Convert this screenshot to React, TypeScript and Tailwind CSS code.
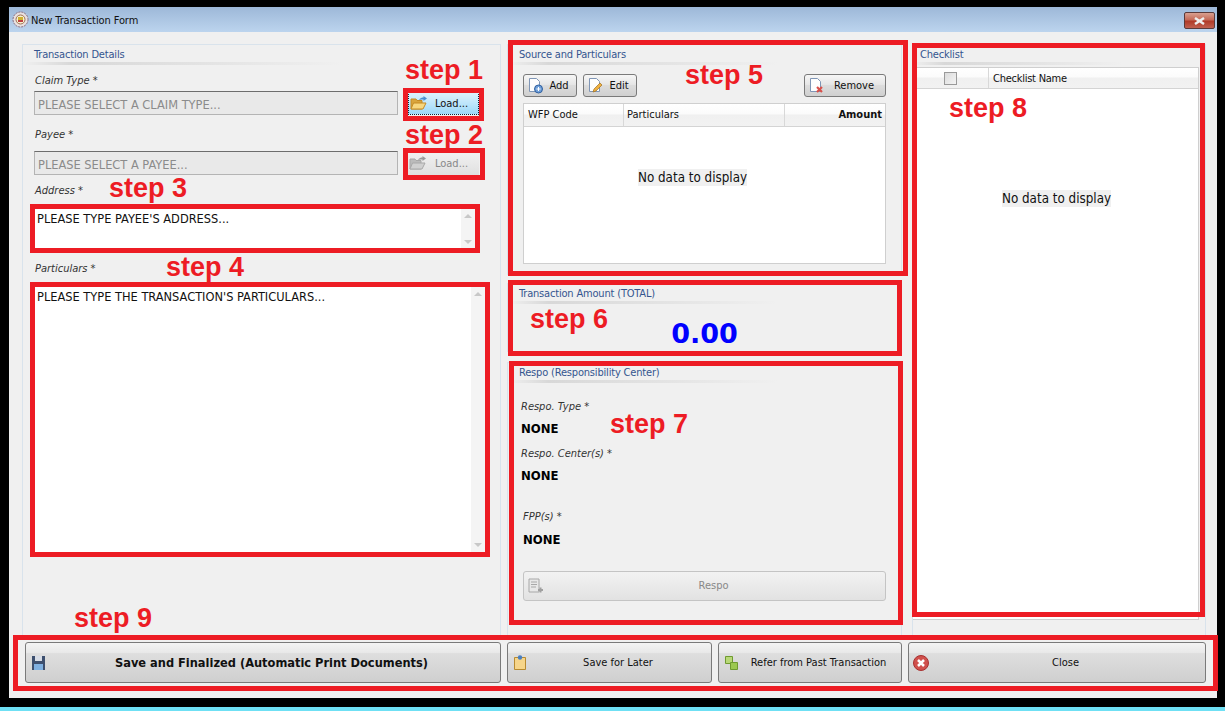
import React from "react";

const ui = "font-['DejaVu_Sans_Condensed','Noto_Sans',sans-serif]";
const btnBg = "bg-[linear-gradient(#f6f6f6,#e6e6e6_45%,#dcdcdc_50%,#d0d0d0)]";

function Folder({ gray = false }: { gray?: boolean }) {
  const a = gray ? "#d0d0d0" : "#f7d77e";
  const b = gray ? "#a8a8a8" : "#c58a22";
  const c = gray ? "#9a9a9a" : "#4a8fd0";
  return (
    <svg width="17" height="14" viewBox="0 0 17 14" className="shrink-0">
      <path d="M1 3h5l1 1.500h5V13H1z" fill={gray ? "#bbb" : "#d9a53c"} stroke={b} />
      <path d="M1 13l2.500-6H16l-3 6z" fill={a} stroke={b} />
      <path d="M9 4c1-2 3-2.500 4.500-2.500V0L17 2.500 13.500 5V3.500C12 3.500 10.500 3.500 9 4z" fill={c} />
    </svg>
  );
}

function Page({ children }: { children?: React.ReactNode }) {
  return (
    <svg width="16" height="17" viewBox="0 0 16 17" className="shrink-0">
      <path d="M1.500 1.500h7l3 3v10h-10z" fill="#fdfdfd" stroke="#7f95b5" />
      {children}
    </svg>
  );
}

function Group({ title, className, pad = "pl-[11px]", line = "w-[270px]", children }: { title: string; className: string; pad?: string; line?: string; children?: React.ReactNode }) {
  return (
    <section className={`border border-[#d9e3ec] bg-[#f0f0f0] ${className}`}>
      <h2 className={`${pad} h-[17px] text-[11px] leading-[19px] tracking-[-0.18px] font-normal text-[#34558f]`}>{title}</h2>
      <div className={`mb-[1px] h-[3px] bg-[linear-gradient(90deg,#f0f0f0,#d8d8d8_15%,#e4e4e4_60%,#f0f0f0)] ${line}`} />
      {children}
    </section>
  );
}

function Field({ text }: { text: string }) {
  return (
    <div className="h-[24px] w-[364px] border border-[#b4b4b4] border-t-[#6d6d6d] bg-[#e9e9e9] pl-[3px] text-[12.7px] leading-[25px] text-[#8b8b8b]">
      {text}
    </div>
  );
}

function Label({ children, className = "" }: { children: React.ReactNode; className?: string }) {
  return <div className={`text-[11px] italic leading-[14px] text-[#333] ${className}`}>{children}</div>;
}

function Scroll() {
  return (
    <div className="flex w-[14px] flex-col items-center justify-between bg-[#f4f4f4] py-[5px]">
      <div className="h-0 w-0 border-x-[4px] border-b-[4px] border-x-transparent border-b-[#c8c8c8]" />
      <div className="h-0 w-0 border-x-[4px] border-t-[4px] border-x-transparent border-t-[#c8c8c8]" />
    </div>
  );
}

function SmallBtn({ icon, label, className }: { icon: React.ReactNode; label: string; className: string }) {
  return (
    <button className={`flex h-[23px] items-center rounded-[3px] border border-[#7a7a7a] ${btnBg} pl-[4px] text-[11px] text-[#111] ${className}`}>
      {icon}
      <span className="flex-1 pr-[2px] pt-[1px] text-center">{label}</span>
    </button>
  );
}

function BigBtn({ icon, label, className, bold = false }: { icon: React.ReactNode; label: string; className: string; bold?: boolean }) {
  return (
    <button className={`flex h-[41px] items-center rounded-[3px] border border-[#7a7a7a] bg-[linear-gradient(#f4f4f4,#e8e8e8_26%,#dedede_27%,#cfcfcf)] pl-[4px] ${bold ? "text-[12.7px] font-bold" : "text-[11px]"} text-[#111] ${className}`}>
      <span className="flex h-[20px] w-[16px] shrink-0 items-center justify-center">{icon}</span>
      <span className="flex-1 whitespace-nowrap pr-[3px] pt-[1px] text-center">{label}</span>
    </button>
  );
}

function Grid({ className, children }: { className: string; children: React.ReactNode }) {
  return <div className={`flex flex-col border border-[#cfcfcf] bg-white ${className}`}>{children}</div>;
}

function Empty({ className }: { className: string }) {
  return (
    <div className={`flex flex-1 justify-center ${className}`}>
      <span className="h-[17px] bg-[#f0f0f0] text-[13.3px] leading-[17px] text-[#111]">No data to display</span>
    </div>
  );
}

const headBg = "bg-[linear-gradient(#ffffff,#fbfbfb_45%,#f0f0f0_50%,#f2f2f2)]";

const boxes = [
  "left-[403px] top-[88px] w-[81px] h-[33px]",
  "left-[403px] top-[148px] w-[82px] h-[32px]",
  "left-[30px] top-[204px] w-[450px] h-[49px]",
  "left-[30px] top-[282px] w-[460px] h-[275px]",
  "left-[508px] top-[40px] w-[400px] h-[236px]",
  "left-[508px] top-[280px] w-[394px] h-[76px]",
  "left-[509px] top-[361px] w-[394px] h-[264px]",
  "left-[912px] top-[43px] w-[293px] h-[574px]",
  "left-[13px] top-[635px] w-[1205px] h-[56px]",
];

const steps = [
  { t: "step 1", c: "left-[405px] top-[55px]" },
  { t: "step 2", c: "left-[405px] top-[120px]" },
  { t: "step 3", c: "left-[109px] top-[173px]" },
  { t: "step 4", c: "left-[166px] top-[252px]" },
  { t: "step 5", c: "left-[685px] top-[60px]" },
  { t: "step 6", c: "left-[530px] top-[304px]" },
  { t: "step 7", c: "left-[610px] top-[409px]" },
  { t: "step 8", c: "left-[949px] top-[93px]" },
  { t: "step 9", c: "left-[74px] top-[603px]" },
];

export default function App() {
  return (
    <div className={`relative flex h-[711px] w-[1225px] flex-col overflow-hidden bg-black ${ui}`}>
      <div className="mx-[9px] mt-[7px] flex h-[691px] w-[1208px] flex-col bg-[#f0f0f0]">
        <header className="flex h-[25px] shrink-0 items-center bg-[linear-gradient(#9db8d8,#bcd4ee)] pl-[3px] pr-[2px]">
          <svg width="17" height="17" viewBox="0 0 17 17" className="shrink-0">
            <circle cx="8.500" cy="8.500" r="7.500" fill="#e8e0e0" stroke="#8a6a7a" strokeDasharray="2 1" />
            <circle cx="8.500" cy="8.500" r="4.500" fill="#f6f0d0" stroke="#a07050" />
            <rect x="6" y="6" width="5" height="3" fill="#d0b030" />
            <rect x="6" y="9" width="5" height="2" fill="#c04040" />
          </svg>
          <span className="ml-[2px] pt-[3px] text-[11px] tracking-[-0.1px] text-[#111]">New Transaction Form</span>
          <button className="ml-auto mt-[2px] flex h-[17px] w-[31px] items-center justify-center rounded-[2px] border border-[#5a3a3a] bg-[linear-gradient(#d9a090,#c46a58_45%,#b03a28_55%,#c06050)]">
            <svg width="13" height="8" viewBox="0 0 13 8">
              <path d="M2 1l9 6M11 1l-9 6" stroke="#eee" strokeWidth="2.500" />
            </svg>
          </button>
        </header>

        <div className="flex gap-[6px] pl-[13px] pt-[12px]">
          <Group title="Transaction Details" line="w-[320px]" className="h-[592px] w-[479px]">
            <div className="pl-[11px] pt-[8px]">
              <Label className="pl-[1px]">Claim Type *</Label>
              <div className="mt-[3px] flex items-center">
                <Field text="PLEASE SELECT A CLAIM TYPE..." />
                <button className="ml-[10px] flex h-[24px] w-[71px] items-center border border-dotted border-[#123] bg-[linear-gradient(#dff3fd,#bfe6fb_50%,#9cd8f8)] pl-[1px] text-[11px] text-[#111]">
                  <Folder />
                  <span className="flex-1 pr-[2px] pt-[3px] text-center">Load...</span>
                </button>
              </div>
              <Label className="mt-[13px] pl-[1px]">Payee *</Label>
              <div className="mt-[9px] flex items-center">
                <Field text="PLEASE SELECT A PAYEE..." />
                <button className="ml-[10px] flex h-[24px] w-[71px] items-center bg-[linear-gradient(#f2f2f2,#e0e0e0)] pl-[1px] text-[11px] text-[#888]">
                  <Folder gray />
                  <span className="flex-1 pr-[2px] pt-[3px] text-center">Load...</span>
                </button>
              </div>
              <Label className="mt-[9px] pl-[1px]">Address *</Label>
              <div className="ml-[1px] mt-[11px] flex h-[40px] w-[440px] bg-white">
                <div className="flex-1 pl-[2px] pt-[2px] text-[12.7px] leading-[16px] text-[#111]">PLEASE TYPE PAYEE'S ADDRESS...</div>
                <Scroll />
              </div>
              <Label className="mt-[13px] pl-[1px]">Particulars *</Label>
              <div className="ml-[1px] mt-[11px] flex h-[265px] w-[450px] bg-white">
                <div className="flex-1 pl-[2px] pt-[2px] text-[12.7px] leading-[16px] text-[#111]">PLEASE TYPE THE TRANSACTION'S PARTICULARS...</div>
                <Scroll />
              </div>
            </div>
          </Group>

          <div className="flex w-[395px] flex-col">
            <Group title="Source and Particulars" className="h-[231px]">
              <div className="flex px-[15px] pt-[8px]">
                <SmallBtn
                  className="w-[54px]"
                  label="Add"
                  icon={
                    <Page>
                      <circle cx="10.500" cy="12" r="4" fill="#6f9fd8" stroke="#2f5f9f" />
                      <path d="M8.500 12h4M10.500 10v4" stroke="#fff" />
                    </Page>
                  }
                />
                <SmallBtn
                  className="ml-[6px] w-[54px]"
                  label="Edit"
                  icon={
                    <Page>
                      <path d="M5 15l1-3 6-6 2 2-6 6z" fill="#eeb040" stroke="#a07020" strokeWidth="0.700" />
                    </Page>
                  }
                />
                <SmallBtn
                  className="ml-auto w-[82px]"
                  label="Remove"
                  icon={
                    <Page>
                      <path d="M8 10l5 5M13 10l-5 5" stroke="#d8504a" strokeWidth="2.200" />
                    </Page>
                  }
                />
              </div>
              <Grid className="mx-[15px] mt-[6px] h-[161px]">
                <div className={`flex h-[23px] shrink-0 border-b border-[#d4d4d4] text-[11px] leading-[22px] text-[#111] ${headBg}`}>
                  <div className="w-[100px] border-r border-[#d8d8d8] pl-[4px]">WFP Code</div>
                  <div className="w-[161px] border-r border-[#d8d8d8] pl-[3px]">Particulars</div>
                  <div className="flex-1 pr-[3px] text-right font-bold">Amount</div>
                </div>
                <Empty className="pr-[24px] pt-[42px]" />
              </Grid>
            </Group>

            <Group title="Transaction Amount (TOTAL)" className="mt-[8px] h-[69px]">
              <div className="pt-[12px] text-center font-['DejaVu_Sans',sans-serif] text-[27px] font-bold leading-[34px] text-[#0000ff]">0.00</div>
            </Group>

            <Group title="Respo (Responsibility Center)" className="mt-[10px] h-[274px]">
              <div className="pl-[13px] pt-[16px]">
                <Label>Respo. Type *</Label>
                <div className="mt-[6px] text-[13px] font-bold leading-[18px] text-black">NONE</div>
                <Label className="mt-[9px]">Respo. Center(s) *</Label>
                <div className="mt-[6px] text-[13px] font-bold leading-[18px] text-black">NONE</div>
                <Label className="ml-[2px] mt-[25px]">FPP(s) *</Label>
                <div className="ml-[2px] mt-[7px] text-[13px] font-bold leading-[18px] text-black">NONE</div>
              </div>
              <button className="ml-[15px] mt-[22px] flex h-[30px] w-[363px] items-center rounded-[3px] border border-[#c4c4c4] bg-[linear-gradient(#f2f2f2,#e2e2e2)] pl-[4px] text-[11px] text-[#888]">
                <svg width="16" height="16" viewBox="0 0 16 16" className="shrink-0">
                  <path d="M1 1h10v13H1z" fill="#e8e8e8" stroke="#a8a8a8" />
                  <path d="M3 4h6M3 6.500h6M3 9h5" stroke="#a8a8a8" />
                  <path d="M10 12h5M12.500 9.500v5" stroke="#a0a0a0" strokeWidth="2" />
                </svg>
                <span className="flex-1 pr-[2px] pt-[1px] text-center">Respo</span>
              </button>
            </Group>
          </div>

          <div className="ml-[4px] w-[294px]">
            <Group title="Checklist" pad="pl-[7px]" line="w-[210px]" className="h-[592px] border-b-0">
              <Grid className="mr-[6px] mt-[2px] h-[553px] border-l-0">
                <div className={`flex h-[21px] shrink-0 border-b border-[#d4d4d4] text-[11px] leading-[21px] text-[#111] ${headBg}`}>
                  <div className="flex w-[76px] items-center justify-center border-r border-[#d8d8d8]">
                    <span className="h-[13px] w-[13px] border border-[#9a9a9a] bg-[linear-gradient(135deg,#dcdcdc,#f4f4f4)]" />
                  </div>
                  <div className="flex-1 pl-[4px] tracking-[-0.25px]">Checklist Name</div>
                </div>
                <Empty className="pl-[2px] pt-[101px]" />
              </Grid>
            </Group>
          </div>
        </div>

        <div className="flex gap-[6px] pl-[16px] pt-[6px]">
          <BigBtn
            bold
            className="w-[476px]"
            label="Save and Finalized (Automatic Print Documents)"
            icon={
              <svg width="13" height="14" viewBox="0 0 13 14">
                <path d="M0 0h13v14H0z" fill="#3d4f6e" />
                <path d="M3 0h7v5H3z" fill="#d8dde6" />
                <path d="M2 8h9v6H2z" fill="#7fb0e0" />
              </svg>
            }
          />
          <BigBtn
            className="w-[205px]"
            label="Save for Later"
            icon={
              <svg width="12" height="15" viewBox="0 0 12 15">
                <path d="M.5 2.500h11v12H.5z" fill="#f6d58a" stroke="#b88a30" />
                <circle cx="6" cy="2.500" r="2.200" fill="#4a7fc0" />
              </svg>
            }
          />
          <BigBtn
            className="w-[184px]"
            label="Refer from Past Transaction"
            icon={
              <svg width="13" height="14" viewBox="0 0 13 14">
                <path d="M.5.500h7v7h-7z" fill="#b8d878" stroke="#6f9a30" />
                <path d="M5.500 6.500h7v7h-7z" fill="#9cc850" stroke="#6f9a30" />
              </svg>
            }
          />
          <BigBtn
            className="w-[298px]"
            label="Close"
            icon={
              <svg width="16" height="16" viewBox="0 0 16 16">
                <circle cx="8" cy="8" r="7.500" fill="#d0504c" stroke="#a83030" />
                <path d="M5 5l6 6M11 5l-6 6" stroke="#fff" strokeWidth="2.500" />
              </svg>
            }
          />
        </div>
      </div>

      <div className="mt-auto h-[4px] bg-[#6fe0f4]" />

      {boxes.map((b) => (
        <div key={b} className={`pointer-events-none absolute border-[5px] border-[#ed1c24] ${b}`} />
      ))}
      {steps.map((s) => (
        <div
          key={s.t}
          className={`absolute whitespace-nowrap font-['Liberation_Sans',sans-serif] text-[27px] font-bold leading-[30px] text-[#ed1c24] ${s.c}`}
        >
          {s.t}
        </div>
      ))}
    </div>
  );
}
